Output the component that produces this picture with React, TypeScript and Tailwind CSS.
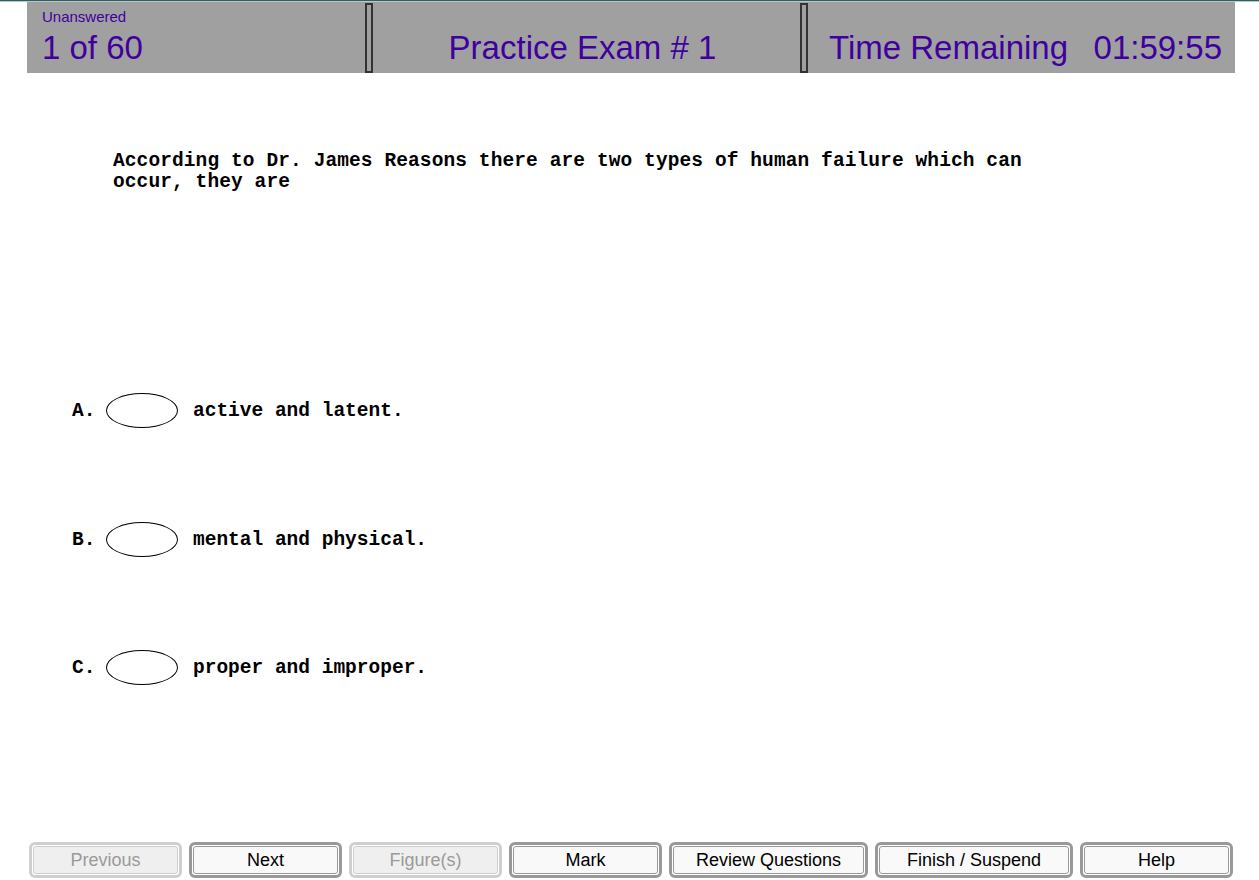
import React from "react";

const sans = { fontFamily: '"Liberation Sans", Arial, sans-serif' };
const mono = { fontFamily: '"Liberation Mono", "Courier New", monospace' };

function Divider() {
  return <div className="mt-px h-[70px] w-[8px] shrink-0 border-2 border-[#333333] bg-[#a0a0a0]" />;
}

function Btn({ label, width, disabled }: { label: string; width: number; disabled?: boolean }) {
  return (
    <div
      className={
        "h-[36px] shrink-0 rounded-[6px] border-[3px] p-px " +
        (disabled ? "border-[#cfcfcf] bg-white" : "border-[#999999] bg-white")
      }
      style={{ width }}
    >
      <div
        className={
          "flex h-full w-full items-center justify-center rounded-[3px] border text-[18px] " +
          (disabled
            ? "border-[#cfcfcf] bg-[#efefef] text-[#9a9a9a]"
            : "border-[#999999] bg-[#f9f9f9] text-black")
        }
        style={sans}
      >
        {label}
      </div>
    </div>
  );
}

function Option({ letter, text }: { letter: string; text: string }) {
  return (
    <div className="flex h-[35px] items-center pl-[72px]" style={mono}>
      <div className="w-[34px] pt-[3px] text-[19.5px] font-bold text-black">{letter}</div>
      <div className="h-[35px] w-[72px] rounded-[50%] border-[1.5px] border-black bg-white" />
      <div className="ml-[15px] pt-[3px] text-[19.5px] font-bold text-black">{text}</div>
    </div>
  );
}

export default function App() {
  return (
    <div className="flex h-[880px] w-[1259px] flex-col overflow-hidden bg-white">
      <div className="h-px w-full bg-[#3d5a5a]" />
      <div className="h-px w-full bg-[#a9cccc]" />
      <div className="ml-[27px] mr-[24px] flex h-[71px] bg-[#a0a0a0] text-[#40009f]" style={sans}>
        <div className="w-[338px] shrink-0 pl-[15px] pt-[7px]">
          <div className="text-[15px] leading-[16px]">Unanswered</div>
          <div className="mt-[4px] text-[33px] leading-[37px]">1 of 60</div>
        </div>
        <Divider />
        <div className="flex-1 pr-[8px] pt-[27px] text-center text-[33px] leading-[37px]">Practice Exam # 1</div>
        <Divider />
        <div className="flex w-[427px] shrink-0 justify-between pl-[21px] pr-[13px] pt-[27px] text-[33px] leading-[37px]">
          <span>Time Remaining</span>
          <span>01:59:55</span>
        </div>
      </div>

      <div className="pl-[113px] pt-[78px]">
        <div
          className="w-[940px] text-[19.5px] font-bold leading-[21px] tracking-[0.1px] text-black"
          style={mono}
        >
          According to Dr. James Reasons there are two types of human failure which can occur, they are
        </div>
      </div>

      <div className="mt-[200px] flex flex-col gap-[93.5px]">
        <Option letter="A." text="active and latent." />
        <Option letter="B." text="mental and physical." />
        <Option letter="C." text="proper and improper." />
      </div>

      <div className="mt-auto mb-[2px] flex gap-[7px] pl-[29px]">
        <Btn label="Previous" width={153} disabled />
        <Btn label="Next" width={153} />
        <Btn label="Figure(s)" width={153} disabled />
        <Btn label="Mark" width={153} />
        <Btn label="Review Questions" width={199} />
        <Btn label="Finish / Suspend" width={198} />
        <Btn label="Help" width={153} />
      </div>
    </div>
  );
}
